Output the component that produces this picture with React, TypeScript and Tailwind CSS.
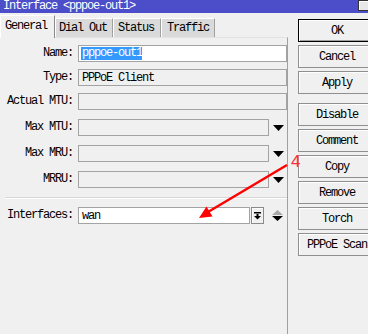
import React from "react";

const Field = ({ w, bg = "bg-[#f0f0f0]", children }: { w: string; bg?: string; children?: React.ReactNode }) => (
  <div className={`${w} ${bg} h-[17px] border border-[#a3a3a3] flex items-center pl-[2px] overflow-hidden whitespace-nowrap`}>{children}</div>
);

const Label = ({ t }: { t: string }) => (
  <div className="w-[73px] text-right whitespace-nowrap leading-[17px]">{t}</div>
);

const DownTri = () => (
  <svg width="11" height="6" viewBox="0 0 11 6" className="ml-[4px]">
    <polygon points="0,0 11,0 5.5,6" fill="#000" />
  </svg>
);

const Btn = ({ t, def, extra = "" }: { t: string; def?: boolean; extra?: string }) => (
  <div
    className={`w-[78px] h-[23px] shrink-0 flex items-center justify-center whitespace-nowrap bg-[#f0f0f0] border ${
      def ? "border-black shadow-[inset_1px_1px_0_#ffffff,inset_-1px_-1px_0_#a0a0a0]" : "border-[#8f8f8f] shadow-[inset_1px_1px_0_#ffffff]"
    } ${extra}`}
  >
    {t}
  </div>
);

export default function App() {
  return (
    <div className="w-[368px] h-[334px] bg-[#f0f0f0] overflow-hidden relative text-black font-mono text-[12px] tracking-[-1.2px]">
      {/* title bar */}
      <div className="h-[13px] bg-[#4b4dc9] flex items-center pl-[3px] text-white relative leading-[13px]">
        <span>Interface &lt;pppoe-out1&gt;</span>
        <div className="absolute right-[-4px] top-0 w-[14px] h-[11px] border border-[#333] bg-[#e8e8e8] shadow-[inset_1px_1px_0_#fff]" />
      </div>
      <div className="flex">
        {/* left */}
        <div className="w-[296px] flex flex-col">
          <div className="h-[24px] flex items-end">
            <div className="h-[23px] w-[55px] pl-[4px] pt-[2px] bg-[#f0f0f0] border-l border-t border-white border-r border-r-[#8a8a8a] relative z-10 mb-[-1px] leading-[16px]">
              General
            </div>
            <div className="h-[19px] w-[58px] pl-[3px] bg-[#dadada] border-l border-t border-white border-r border-r-[#a0a0a0] leading-[18px]">
              Dial Out
            </div>
            <div className="h-[19px] w-[48px] pl-[4px] bg-[#dadada] border-l border-t border-white border-r border-r-[#a0a0a0] leading-[18px]">
              Status
            </div>
            <div className="h-[19px] w-[54px] pl-[5px] bg-[#dadada] border-l border-t border-white border-r border-r-[#a0a0a0] leading-[18px]">
              Traffic
            </div>
          </div>
          <div className="h-[297px] border-t border-t-[#e2e2e2] border-r border-r-[#a0a0a0] pt-[7px] flex flex-col">
            <div className="flex items-center">
              <Label t="Name:" />
              <div className="ml-[5px]">
                <Field w="w-[209px]" bg="bg-white">
                  <span className="bg-[#3399ff] text-white leading-[13px] pl-[1px]">pppoe-out1</span>
                </Field>
              </div>
            </div>
            <div className="flex items-center mt-[7px]">
              <Label t="Type:" />
              <div className="ml-[5px]">
                <Field w="w-[209px]">
                  <span className="pl-[1px]">PPPoE Client</span>
                </Field>
              </div>
            </div>
            <div className="flex items-center mt-[7px]">
              <Label t="Actual MTU:" />
              <div className="ml-[5px]">
                <Field w="w-[209px]" />
              </div>
            </div>
            <div className="flex items-center mt-[9px]">
              <Label t="Max MTU:" />
              <div className="ml-[5px] flex items-center">
                <Field w="w-[191px]" />
                <DownTri />
              </div>
            </div>
            <div className="flex items-center mt-[9px]">
              <Label t="Max MRU:" />
              <div className="ml-[5px] flex items-center">
                <Field w="w-[191px]" />
                <DownTri />
              </div>
            </div>
            <div className="flex items-center mt-[9px]">
              <Label t="MRRU:" />
              <div className="ml-[5px] flex items-center">
                <Field w="w-[191px]" />
                <DownTri />
              </div>
            </div>
            <div className="ml-[5px] w-[282px] mt-[9px] h-[2px] border-t border-t-[#d6d6d6] border-b border-b-white" />
            <div className="flex items-center mt-[8px]">
              <Label t="Interfaces:" />
              <div className="ml-[5px] flex items-center">
                <Field w="w-[172px]" bg="bg-white">
                  <span className="pl-[1px]">wan</span>
                </Field>
                <div className="ml-[1px] w-[13px] h-[17px] border border-[#8a8a8a] bg-[#f0f0f0] shadow-[inset_1px_1px_0_#fff] flex items-center justify-center">
                  <svg width="7" height="8" viewBox="0 0 7 8">
                    <rect x="0" y="0" width="7" height="1.5" fill="#000" />
                    <rect x="2.5" y="2" width="2" height="2.5" fill="#000" />
                    <polygon points="0,4 7,4 3.5,7.5" fill="#000" />
                  </svg>
                </div>
                <svg width="11" height="11" viewBox="0 0 11 11" className="ml-[8px]">
                  <polygon points="0,5 11,5 5.5,0" fill="#a8a8a8" />
                  <polygon points="0,6 11,6 5.5,11" fill="#000" />
                </svg>
              </div>
            </div>
          </div>
        </div>
        {/* right buttons */}
        <div className="pl-[10px] pt-[6px] flex flex-col gap-[3px]">
          <Btn t="OK" def />
          <Btn t="Cancel" />
          <Btn t="Apply" />
          <Btn t="Disable" extra="mt-[6px]" />
          <Btn t="Comment" />
          <Btn t="Copy" />
          <Btn t="Remove" />
          <Btn t="Torch" />
          <Btn t="PPPoE Scan" />
        </div>
      </div>
      {/* annotation */}
      <svg className="absolute left-0 top-0 pointer-events-none" width="368" height="334" viewBox="0 0 368 334">
        <line x1="287" y1="165" x2="208" y2="212" stroke="#ff0000" strokeWidth="2.5" />
        <polygon points="199,218 212.5,216.5 206.5,206.5" fill="#ff0000" />
      </svg>
      <span className="absolute left-[291px] top-[152px] text-[#ff2a3c] font-['Liberation_Sans'] text-[17px] tracking-normal leading-[20px]">
        4
      </span>
    </div>
  );
}
